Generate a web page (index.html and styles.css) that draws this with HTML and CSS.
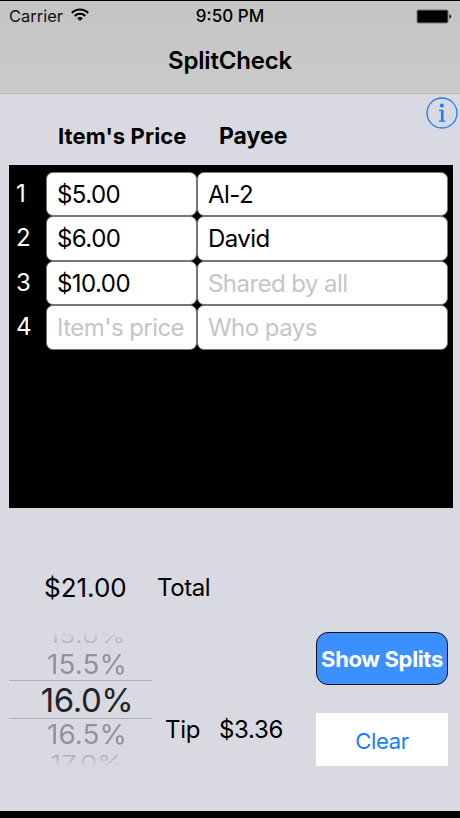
FILE: index.html
```
<!DOCTYPE html>
<html lang="en">
<head>
    <meta charset="UTF-8">
    <title>SplitCheck</title>
    <link rel="stylesheet" href="styles.css">
</head>
<body>

    <header class="header">
        <div class="status-bar">
            <div class="carrier">
                <span>Carrier</span>
                <svg class="wifi" width="18" height="14" viewBox="0 0 18 14">
                    <path d="M.8 5a11.6 11.6 0 0 1 16.4 0M3.700 8a7.500 7.500 0 0 1 10.600 0" fill="none" stroke="#000" stroke-width="2"/>
                    <path d="M6.2 10.3a4.1 4.1 0 0 1 5.6 0L9 13.1z"/>
                </svg>
            </div>
            <div class="clock">9:50 PM</div>
            <svg class="battery" width="36" height="15" viewBox="0 0 36 15">
                <rect x=".5" y=".5" width="32" height="14" rx="2" fill="#777"/>
                <rect x="1.5" y="1.5" width="30" height="12" rx="1"/>
                <path d="M33.5 5.2q1.6 .6 1.6 2.3t-1.6 2.3z"/>
            </svg>
        </div>
        <h1 class="title">SplitCheck</h1>
    </header>

    <main>
        <div class="columns">
            <h2 class="price-heading">Item's Price</h2>
            <h2 class="payee-heading">Payee</h2>
            <svg class="info" width="32" height="32" viewBox="0 0 32 32">
                <circle cx="16" cy="16" r="15" fill="none" stroke="#167efb" stroke-width="1.3"/>
                <circle cx="15.9" cy="8.6" r="2" fill="#167efb"/>
                <path d="M13 12.700h4.500v10.800h1.700v1.200H13v-1.200h2v-9.600h-2z" fill="#167efb"/>
            </svg>
        </div>

        <div class="items">
            <div class="item">
                <span class="number">1</span>
                <div class="field">$5.00</div>
                <div class="field payee">Al-2</div>
            </div>
            <div class="item">
                <span class="number">2</span>
                <div class="field">$6.00</div>
                <div class="field payee">David</div>
            </div>
            <div class="item">
                <span class="number">3</span>
                <div class="field">$10.00</div>
                <div class="field payee empty">Shared by all</div>
            </div>
            <div class="item">
                <span class="number">4</span>
                <div class="field empty">Item's price</div>
                <div class="field payee empty">Who pays</div>
            </div>
        </div>

        <div class="total">
            <span class="total-value">$21.00</span>
            <span class="total-label">Total</span>
        </div>

        <div class="bottom">
            <div class="picker">
                <div class="row far top"><span>15.0%</span></div>
                <div class="row near"><span>15.5%</span></div>
                <div class="row selected"><span>16.0%</span></div>
                <div class="row near"><span>16.5%</span></div>
                <div class="row far low"><span>17.0%</span></div>
            </div>
            <div class="tip">
                <span class="tip-label">Tip</span>
                <span class="tip-value">$3.36</span>
            </div>
            <div class="buttons">
                <button class="show">Show Splits</button>
                <button class="clear">Clear</button>
            </div>
        </div>
    </main>

</body>
</html>
```
FILE: styles.css
```
* {
    box-sizing: border-box;
}

body {
    margin: 0;
    height: 818px;
    overflow: hidden;
    border-top: 1px solid #000;
    border-bottom: 7px solid #000;
    background: #d8d9e1;
    font-family: Inter, "Liberation Sans", sans-serif;
    font-size: 24px;
    color: #000;
}

h1, h2 {
    margin: 0;
}

.header {
    height: 93px;
    background: linear-gradient(#c4c4c4, #cacaca);
    border-bottom: 1px solid #bcbcc0;
}

.status-bar {
    display: grid;
    grid-template-columns: 1fr auto 1fr;
    align-items: center;
    height: 30px;
    padding: 0 8px 0 9px;
    font-size: 16px;
}

.carrier {
    display: flex;
    align-items: center;
    gap: 8px;
    color: #111;
    font-size: 16.5px;
}

.wifi {
    margin-top: -2px;
}

.clock {
    padding-right: 1px;
    font-size: 17px;
    font-weight: 500;
}

.battery {
    justify-self: end;
}

.title {
    padding-top: 15px;
    line-height: 30px;
    font-size: 24px;
    font-weight: 600;
    text-align: center;
    letter-spacing: -0.2px;
}

.columns {
    display: flex;
    height: 71px;
}

.price-heading {
    width: 161px;
    margin-left: 58px;
    padding-top: 27px;
    font-size: 22px;
    line-height: 30px;
    font-weight: 700;
    letter-spacing: 0.1px;
}

.payee-heading {
    flex: 1;
    padding-top: 27px;
    font-size: 23px;
    line-height: 30px;
    font-weight: 700;
}

.info {
    margin: 3px 2px 0 0;
}

.items {
    width: 444px;
    height: 343px;
    margin-left: 9px;
    padding: 7px 5px 0 0;
    background: #000;
}

.item {
    display: grid;
    grid-template-columns: 37px 151px 251px;
    grid-template-rows: 44.4px;
}

.number {
    padding-left: 7px;
    line-height: 44px;
    color: #fff;
}

.field {
    padding-left: 10px;
    border: 0.5px solid #777;
    border-radius: 7px;
    background: #fff;
    line-height: 43px;
    letter-spacing: -0.55px;
    white-space: nowrap;
}

.empty {
    color: #c5c5c9;
}

.total {
    display: flex;
    align-items: center;
    height: 30px;
    margin-top: 64px;
    padding-left: 44px;
}

.total-value {
    width: 113px;
    font-size: 26px;
}

.total-label {
    letter-spacing: -0.4px;
}

.bottom {
    display: flex;
    margin-top: 30px;
}

.picker {
    width: 143px;
    margin-left: 9px;
    text-align: center;
}

.row {
    display: flex;
    align-items: center;
    justify-content: center;
    padding-left: 13px;
}

.far {
    height: 15px;
    overflow: hidden;
    font-size: 27px;
    line-height: 24px;
    color: #a4a5ab;
}

/* outer rows fade out and flatten like the edge of the wheel */
.top {
    align-items: flex-end;
    padding-bottom: 2px;
    -webkit-mask-image: linear-gradient(transparent, #000);
    mask-image: linear-gradient(transparent, #000);
}

.low {
    align-items: flex-start;
    padding-top: 2px;
    -webkit-mask-image: linear-gradient(#000, transparent);
    mask-image: linear-gradient(#000, transparent);
}

.top span {
    transform: scaleY(0.7);
    transform-origin: bottom;
}

.low span {
    transform: scaleY(0.7);
    transform-origin: top;
}

.near {
    height: 33px;
    padding-top: 2px;
    font-size: 28px;
    color: #929398;
}

.near span {
    transform: scaleY(0.95);
}

.selected {
    height: 39px;
    border-top: 1px solid #adaeb4;
    border-bottom: 1px solid #adaeb4;
    font-size: 33px;
    letter-spacing: -0.4px;
    color: #222327;
}

.selected + .near {
    padding-top: 0;
    padding-bottom: 1px;
}

.tip {
    display: flex;
    width: 164px;
    margin-top: 83px;
    padding-left: 13px;
    line-height: 30px;
    letter-spacing: -0.3px;
}

.tip-label {
    width: 54px;
}

.buttons {
    display: flex;
    flex-direction: column;
    gap: 28px;
    width: 132px;
}

button {
    height: 53px;
    padding: 0;
    border: 0;
    font-family: inherit;
    font-size: 22px;
    white-space: nowrap;
    letter-spacing: -0.35px;
}

.show {
    border: 1.5px solid #0a1420;
    border-radius: 12px;
    background: #3b90fe;
    color: #fff;
    font-weight: 700;
}

.clear {
    padding-top: 2px;
    background: #fff;
    color: #167efb;
}
```
